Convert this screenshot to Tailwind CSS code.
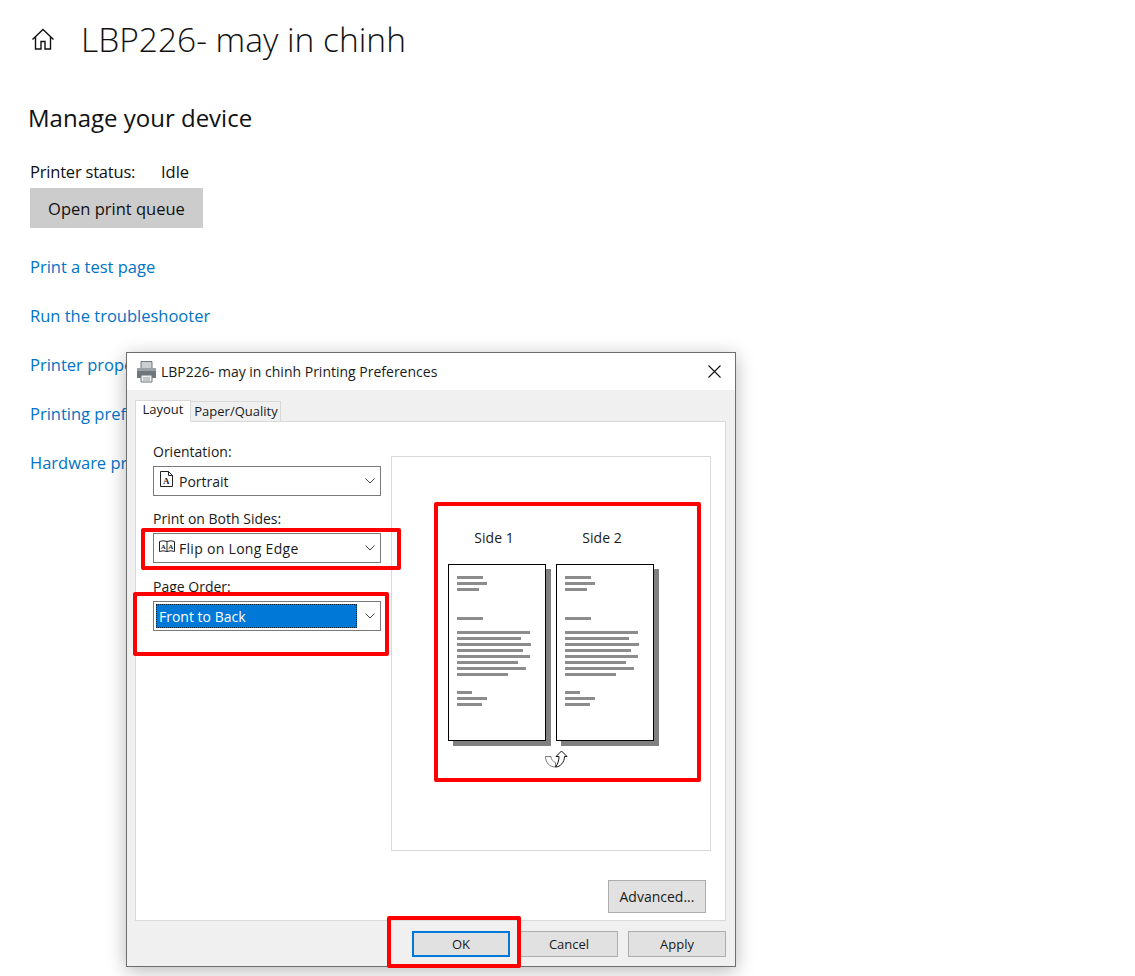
<!DOCTYPE html>
<html>
<head>
<meta charset="utf-8" />
<title>LBP226- may in chinh</title>
<script src="https://cdn.jsdelivr.net/npm/@tailwindcss/browser@4"></script>
</head>
<body class="bg-white font-['Open_Sans','Noto_Sans',sans-serif] text-black">
<div class="relative w-[1135px] h-[976px] overflow-hidden">

	<!-- settings page -->
	<div class="flex items-center pl-[31px] pt-[16px] h-[62px]">
		<svg class="w-[24px] h-[24px]" viewBox="0 0 24 24" fill="none" stroke="#111" stroke-width="1.4">
			<path d="M1.500 12.500 12 2.500l10.500 10M4.500 10v12h5.500v-7.500h4V22h5.500V10" />
		</svg>
		<h1 class="ml-[26px] text-[33.5px] leading-[44px] font-light text-[#111]">LBP226- may in chinh</h1>
	</div>
	<h2 class="ml-[28px] mt-[40px] text-[24px] leading-[32px] font-normal text-[#111]">Manage your device</h2>
	<div class="ml-[30px] mt-[26px] flex text-[16.5px] leading-[24px] h-[28px] text-[#111]">
		<span class="w-[131px] tracking-[-0.2px]">Printer status:</span>
		<span>Idle</span>
	</div>
	<button class="block ml-[30px] w-[173px] h-[40px] pt-[3px] bg-[#cccccc] text-[16.5px] text-[#111]">Open print queue</button>
	<div class="ml-[30px] mt-[27px] flex flex-col gap-[25px] text-[16.5px] leading-[24px] text-[#0073c6]">
		<a>Print a test page</a>
		<a>Run the troubleshooter</a>
		<a>Printer properties</a>
		<a>Printing preferences</a>
		<a>Hardware properties</a>
	</div>

	<!-- printing preferences window -->
	<div class="absolute left-[126px] top-[352px] w-[610px] h-[615px] bg-[#f0f0f0] border border-[#6e6e6e] shadow-[0_4px_18px_rgba(0,0,0,0.28)] text-[14px] text-[#1a1a1a]">
		<div class="flex items-center h-[37px] bg-white pl-[9px] pr-[14px]">
			<svg class="w-[21px] h-[22px]" viewBox="0 0 21 22">
				<path d="M5 .5h11v7H5z" fill="#c9ced2" stroke="#6f767b" />
				<path d="M1 7h19v10H1z" fill="#6f767c" />
				<path d="M1 7h19v3H1z" fill="#9aa1a6" />
				<path d="M5 14h11v7H5z" fill="#eeeeee" stroke="#6f767b" />
				<path d="M7 17h7M7 19h7" stroke="#9aa0a5" />
			</svg>
			<span class="ml-[4px] flex-1">LBP226- may in chinh Printing Preferences</span>
			<svg class="w-[13px] h-[13px]" viewBox="0 0 13 13" stroke="#111" stroke-width="1.1"><path d="M.5.5l12 12M12.5.5l-12 12" /></svg>
		</div>

		<div class="flex items-end ml-[8px] mt-[10px] h-[22px] text-[13px] relative z-10">
			<div class="flex items-center justify-center w-[56px] h-[22px] pb-[3px] bg-white border border-b-0 border-[#d9d9d9]">Layout</div>
			<div class="flex items-center justify-center w-[90px] h-[21px] pl-[1px] bg-[#f0f0f0] border border-l-0 border-[#d9d9d9]">Paper/Quality</div>
		</div>

		<div class="flex flex-col ml-[8px] w-[591px] h-[500px] -mt-[1px] bg-white border border-[#d9d9d9]">
			<div class="flex">
				<div class="ml-[17px] w-[228px] pt-[20px]">
					<div class="h-[20px] leading-[20px]">Orientation:</div>
					<div class="flex items-center mt-[4px] h-[30px] border border-[#7a7a7a] pl-[6px] pr-[5px]">
						<svg class="w-[13px] h-[16px] -mt-[4px]" viewBox="0 0 13 16" fill="none" stroke="#222">
							<path d="M.5.5h8l4 4v11H.5zM8.5.5v4h4" />
							<text x="3" y="13" font-size="9" font-weight="bold" font-family="Liberation Serif" fill="#222" stroke="none">A</text>
						</svg>
						<span class="ml-[6px] flex-1">Portrait</span>
						<svg class="w-[10px] h-[6px]" viewBox="0 0 10 6" fill="none" stroke="#444"><path d="M.5.5 5 5l4.500-4.500" /></svg>
					</div>
					<div class="mt-[13px] h-[20px] leading-[20px]">Print on Both Sides:</div>
					<div class="flex items-center mt-[4px] h-[30px] border border-[#7a7a7a] pl-[5px] pr-[5px]">
						<svg class="w-[16px] h-[13px] -mt-[4px]" viewBox="0 0 16 13" fill="none" stroke="#222">
							<path d="M.5 11.500V1.500q3.500-1.500 7.500 0 4-1.500 7.500 0v10q-3.500-1.500-7.500 0-4-1.500-7.500 0zM8 1.500v10" />
							<text x="1.800" y="8.500" font-size="7" font-weight="bold" font-family="Liberation Serif" fill="#222" stroke="none">A</text>
							<text x="9.300" y="8.500" font-size="7" font-weight="bold" font-family="Liberation Serif" fill="#222" stroke="none">A</text>
						</svg>
						<span class="ml-[4px] flex-1 tracking-[0.3px]">Flip on Long Edge</span>
						<svg class="w-[10px] h-[6px]" viewBox="0 0 10 6" fill="none" stroke="#444"><path d="M.5.5 5 5l4.500-4.500" /></svg>
					</div>
					<div class="mt-[14px] h-[20px] leading-[20px]">Page Order:</div>
					<div class="flex items-center mt-[4px] h-[30px] border border-[#7a7a7a] pl-[2px] pr-[5px]">
						<div class="flex items-center w-[201px] h-[24px] pl-[2px] bg-[#0078d7] text-white border border-dotted border-[#10233a]">Front to Back</div>
						<span class="flex-1"></span>
						<svg class="w-[10px] h-[6px]" viewBox="0 0 10 6" fill="none" stroke="#444"><path d="M.5.5 5 5l4.500-4.500" /></svg>
					</div>
				</div>

				<div class="ml-[10px] mt-[34px] w-[320px] h-[395px] border border-[#d9d9d9] pl-[56px] pt-[71px]">
					<div class="flex gap-[10px] text-center h-[20px] leading-[20px]">
						<div class="w-[98px] pr-[6px]">Side 1</div>
						<div class="w-[98px] pr-[6px]">Side 2</div>
					</div>
					<div class="flex gap-[10px] mt-[16px]">
						<div class="w-[98px] h-[177px] bg-white border border-black shadow-[5px_5px_0_#808080] pl-[8px] pt-[11px] flex flex-col gap-[3px]">
							<i class="block h-[3px] bg-[#8c8c8c] w-[26px]"></i><i class="block h-[3px] bg-[#8c8c8c] w-[30px]"></i><i class="block h-[3px] bg-[#8c8c8c] w-[22px]"></i>
							<i class="block h-[3px] bg-[#8c8c8c] w-[26px] mt-[23px]"></i>
							<i class="block h-[3px] bg-[#8c8c8c] w-[73px] mt-[8px]"></i><i class="block h-[3px] bg-[#8c8c8c] w-[64px]"></i><i class="block h-[3px] bg-[#8c8c8c] w-[74px]"></i><i class="block h-[3px] bg-[#8c8c8c] w-[66px]"></i><i class="block h-[3px] bg-[#8c8c8c] w-[73px]"></i><i class="block h-[3px] bg-[#8c8c8c] w-[61px]"></i><i class="block h-[3px] bg-[#8c8c8c] w-[69px]"></i><i class="block h-[3px] bg-[#8c8c8c] w-[51px]"></i>
							<i class="block h-[3px] bg-[#8c8c8c] w-[15px] mt-[12px]"></i><i class="block h-[3px] bg-[#8c8c8c] w-[30px]"></i><i class="block h-[3px] bg-[#8c8c8c] w-[25px]"></i>
						</div>
						<div class="w-[98px] h-[177px] bg-white border border-black shadow-[5px_5px_0_#808080] pl-[8px] pt-[11px] flex flex-col gap-[3px]">
							<i class="block h-[3px] bg-[#8c8c8c] w-[26px]"></i><i class="block h-[3px] bg-[#8c8c8c] w-[30px]"></i><i class="block h-[3px] bg-[#8c8c8c] w-[22px]"></i>
							<i class="block h-[3px] bg-[#8c8c8c] w-[26px] mt-[23px]"></i>
							<i class="block h-[3px] bg-[#8c8c8c] w-[73px] mt-[8px]"></i><i class="block h-[3px] bg-[#8c8c8c] w-[64px]"></i><i class="block h-[3px] bg-[#8c8c8c] w-[74px]"></i><i class="block h-[3px] bg-[#8c8c8c] w-[66px]"></i><i class="block h-[3px] bg-[#8c8c8c] w-[73px]"></i><i class="block h-[3px] bg-[#8c8c8c] w-[61px]"></i><i class="block h-[3px] bg-[#8c8c8c] w-[69px]"></i><i class="block h-[3px] bg-[#8c8c8c] w-[51px]"></i>
							<i class="block h-[3px] bg-[#8c8c8c] w-[15px] mt-[12px]"></i><i class="block h-[3px] bg-[#8c8c8c] w-[30px]"></i><i class="block h-[3px] bg-[#8c8c8c] w-[25px]"></i>
						</div>
					</div>
					<svg class="ml-[97px] mt-[9px] w-[24px] h-[18px]" viewBox="0 0 24 18" fill="none" stroke-width="1">
						<path d="M.5 6.500H6c0 3 2 5 4.500 6V17C5 17 .5 13 .5 6.500z" stroke="#777" />
						<path d="M16.500 1 22 6.500h-2.500C19.500 12 15.500 17 10.500 17 13 14 14 10 14 6.500h-3z" stroke="#111" />
					</svg>
				</div>
			</div>
			<div class="flex justify-end pr-[19px] mt-[29px]">
				<button class="w-[98px] h-[33px] bg-[#e1e1e1] border border-[#adadad]">Advanced...</button>
			</div>
		</div>

		<div class="flex justify-end gap-[10px] mt-[10px] pr-[9px]">
			<button class="w-[98px] h-[26px] pt-[1px] bg-[#e1e1e1] border-2 border-[#0078d7] text-[13px]">OK</button>
			<button class="w-[98px] h-[26px] pt-[1px] bg-[#e1e1e1] border border-[#adadad] text-[13px]">Cancel</button>
			<button class="w-[98px] h-[26px] pt-[1px] bg-[#e1e1e1] border border-[#adadad] text-[13px]">Apply</button>
		</div>
	</div>

	<!-- red marks drawn over the screenshot -->
	<div class="absolute left-[141px] top-[528px] w-[260px] h-[42px] border-4 border-[#ff0000] rounded-[2px]"></div>
	<div class="absolute left-[133px] top-[592px] w-[256px] h-[64px] border-4 border-[#ff0000] rounded-[2px]"></div>
	<div class="absolute left-[434px] top-[502px] w-[267px] h-[280px] border-4 border-[#ff0000] rounded-[2px]"></div>
	<div class="absolute left-[387px] top-[916px] w-[134px] h-[52px] border-4 border-[#ff0000] rounded-[2px]"></div>
</div>
</body>
</html>
